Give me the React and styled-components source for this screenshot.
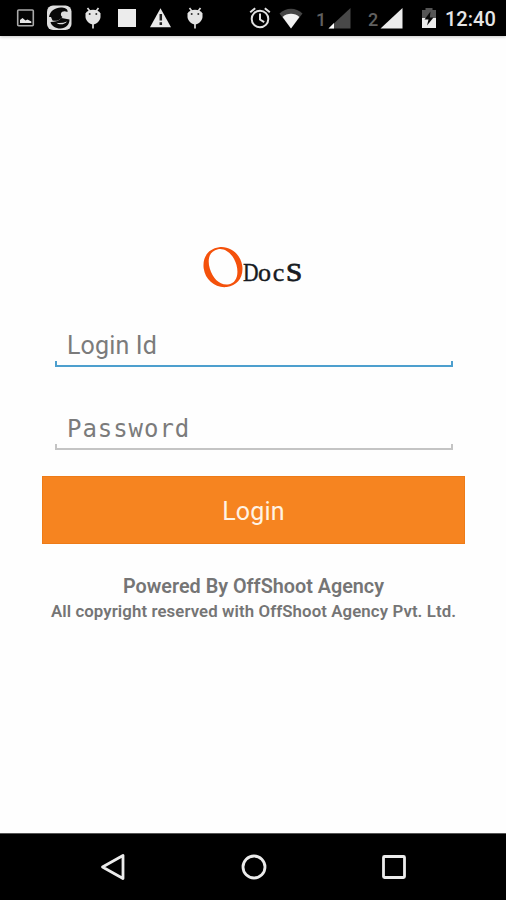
import React from "react";
import styled, { createGlobalStyle } from "styled-components";

const GlobalStyle = createGlobalStyle`
  * { box-sizing: border-box; }
  body { margin: 0; background: #fefefe; font-family: Roboto, sans-serif; }
`;

const Screen = styled.div`
  display: flex;
  flex-direction: column;
  width: 506px;
  height: 900px;
  overflow: hidden;
  background: #fefefe;
`;

const StatusBar = styled.header`
  display: flex;
  flex: none;
  height: 36px;
  padding: 4px 0 4px 14px;
  background: #000;
  box-shadow: 0 1px 3px rgba(0, 0, 0, 0.22);
`;

const StatusIcon = styled.svg`
  display: block;
  flex: none;
  height: 28px;
  margin-left: ${(p) => p.$gap || 0}px;
`;

const SimNumber = styled.span`
  width: 12px;
  margin-left: ${(p) => p.$gap}px;
  font: 500 18px/31px Roboto, sans-serif;
  text-align: center;
  color: #606060;
`;

const Clock = styled.time`
  margin-left: 7px;
  font: 500 20px/30px Roboto, sans-serif;
  letter-spacing: 0;
  color: #e6e6e6;
`;

const Main = styled.main`
  display: flex;
  flex: 1;
  flex-direction: column;
  padding: 209px 41px 0 42px;
`;

const Logo = styled.div`
  display: flex;
  align-self: center;
  height: 44px;
`;

const LogoMark = styled.svg`
  display: block;
  width: 41px;
  height: 44px;
`;

const LogoText = styled.span`
  display: flex;
  align-items: baseline;
  width: 62px;
  padding-top: 14px;
  font: 25px/28px "Liberation Serif", serif;
  color: #171b22;
  -webkit-text-stroke: 0.4px #171b22;
`;

const LogoCap = styled.span`
  display: inline-block;
  width: 15px;
  transform: scaleX(0.86);
  transform-origin: left;
`;

const LogoLower = styled.span`
  font-size: 26px;
  letter-spacing: 1.8px;
`;

const LogoLast = styled.span`
  display: inline-block;
  font-size: 26px;
  -webkit-text-stroke: 0.8px #171b22;
  transform: scaleX(1.12);
  transform-origin: left;
`;

const Field = styled.label`
  display: block;
  position: relative;
  height: 43px;
  margin: ${(p) => p.$top}px 12px 0 13px;
  border-bottom: 2px solid ${(p) => p.$color};

  &::before,
  &::after {
    content: "";
    position: absolute;
    bottom: 0;
    width: 2px;
    height: 4px;
    background: ${(p) => p.$color};
  }
  &::before { left: 0; }
  &::after { right: 0; }
`;

const Input = styled.input`
  display: block;
  width: 100%;
  height: 43px;
  padding: 0 12px;
  border: 0;
  outline: 0;
  background: transparent;
  font: ${(p) => (p.$mono ? '24px "DejaVu Sans Mono", monospace' : "25px Roboto, sans-serif")};
  letter-spacing: ${(p) => p.$spacing}px;

  &::placeholder { color: #7b7b7b; opacity: 1; }
`;

const LoginButton = styled.button`
  width: 423px;
  height: 68px;
  margin-top: 26px;
  padding: 3px 0 0;
  border: 1px solid #ee7b17;
  background: #f68420;
  font: 25px Roboto, sans-serif;
  letter-spacing: 0.2px;
  color: #fff3e4;
`;

const Footer = styled.footer`
  margin: 30px -20px 0;
  text-align: center;
  color: #757575;
`;

const Powered = styled.p`
  margin: 0;
  font: 600 19.8px/25px Roboto, sans-serif;
`;

const Copyright = styled.p`
  margin: 0;
  font: 600 16.8px/25px Roboto, sans-serif;
  letter-spacing: 0.1px;
`;

const NavBar = styled.nav`
  display: flex;
  flex: none;
  justify-content: space-between;
  align-items: center;
  height: 67px;
  padding: 0 96px 0 97px;
  border-top: 1px solid #555;
  background: #000;
`;

const NavIcon = styled.svg`
  display: block;
  width: 32px;
  height: 32px;
  fill: none;
  stroke: #ececec;
  stroke-width: 2.8;
  stroke-linejoin: round;
`;

/* Status glyphs are all drawn on a 28px tall grid. */
function Picture() {
  return (
    <StatusIcon width="24" viewBox="0 0 24 28">
      <rect x="3.7" y="6" width="15.6" height="15.8" rx="1" fill="#050505" stroke="#aaa" strokeWidth="1.6" />
      <path d="M6 19v-3l2.5-2 3 2.4 2-1 3.8 2V19z" fill="#e8e8e8" />
    </StatusIcon>
  );
}

function Messenger() {
  return (
    <StatusIcon width="28" viewBox="0 0 28 28" $gap={7}>
      <rect x="2" y="1.5" width="24.5" height="24.5" rx="6" fill="#dedede" />
      <path d="M4 13C5 6.500 11 3 17 3.500c4 .3 6 2 5.500 4.500-3-1.300-6-.5-6.500 1.500-.3 1.500 0 2.500 1.500 3.500-3 3.500-7 4.500-10 3.500L6 13z" fill="#080808" />
      <path d="M5.500 18c4 0 8-1 11-4l8 1.500C24.500 21 20.500 24.500 15.500 24.500s-9-2.500-10-6.500z" fill="#080808" />
      <path d="M11.500 18.700c3.500.6 7 .1 10.500-1.300-2 3-7.500 4-10.500 1.300z" fill="#ddd" />
    </StatusIcon>
  );
}

function Android({ gap }) {
  return (
    <StatusIcon width="20" viewBox="0 0 20 28" $gap={gap}>
      <path d="M4.500 4l3 4M15.500 4l-3 4M10 18v6.500" stroke="#ddd" strokeWidth="1.7" />
      <path d="M2.500 9.500C5 4.500 15 4.500 17.500 9.500V13c0 3-4 7.500-7.500 7.500S2.500 16 2.500 13z" fill="#e4e4e4" />
      <circle cx="6.700" cy="9.900" r="1" fill="#333" />
      <circle cx="13.300" cy="9.900" r="1" fill="#333" />
    </StatusIcon>
  );
}

function Block() {
  return (
    <StatusIcon width="20" viewBox="0 0 20 28" $gap={14}>
      <rect x="1" y="5" width="18" height="18" fill="#ececec" />
    </StatusIcon>
  );
}

function Warning() {
  return (
    <StatusIcon width="24" viewBox="0 0 24 28" $gap={11}>
      <path d="M12.500 4.200L23 23.300H2z" fill="#eaeaea" />
      <path d="M12.800 10v6.500M12.800 18.300v2.700" stroke="#222" strokeWidth="2.500" />
    </StatusIcon>
  );
}

function Alarm() {
  return (
    <StatusIcon width="24" viewBox="0 0 24 28" $gap={43}>
      <g fill="none" stroke="#e2e2e2" strokeWidth="2">
        <circle cx="12" cy="15" r="8.300" />
        <path d="M2.200 8.300l5-4M21.800 8.300l-5-4M12 9.500v6l4.200 2.600" />
      </g>
    </StatusIcon>
  );
}

function Wifi() {
  return (
    <StatusIcon width="26" viewBox="0 0 26 28" $gap={6}>
      <path d="M1.500 9.500C8 3.200 18 3.200 24.500 9.500L13 24.500z" fill="#454545" />
      <path d="M4.600 13C9 8.800 17 8.800 21.400 13L13 24.500z" fill="#f2f2f2" />
    </StatusIcon>
  );
}

function Signal({ full }) {
  return (
    <StatusIcon width="24" viewBox="0 0 24 28" $gap={1}>
      <path d="M22.500 4v20.500H.5z" fill={full ? "#ececec" : "#484848"} />
      {!full && <path d="M6 19v5.500H.5z" fill="#fff" />}
    </StatusIcon>
  );
}

function Battery() {
  return (
    <StatusIcon width="18" viewBox="0 0 18 28" $gap={16}>
      <path d="M2 6h3.500V4h7v2H16v18H2z" fill="#555" />
      <path d="M2 14h14v10H2z" fill="#eee" />
      <path d="M10.500 7.500L4.500 15.500h4L7 21.500l6.500-8H9.800z" fill="#080808" />
    </StatusIcon>
  );
}

export default function App() {
  return (
    <Screen>
      <GlobalStyle />
      <StatusBar>
        <Picture />
        <Messenger />
        <Android gap={10} />
        <Block />
        <Warning />
        <Android gap={13} />
        <Alarm />
        <Wifi />
        <SimNumber $gap={11}>1</SimNumber>
        <Signal />
        <SimNumber $gap={15}>2</SimNumber>
        <Signal full />
        <Battery />
        <Clock>12:40</Clock>
      </StatusBar>
      <Main>
        <Logo>
          <LogoMark viewBox="0 0 41 44">
            <path
              fillRule="evenodd"
              fill="#f4510b"
              d="M17 2.200C28 .7 38.500 9 40.200 20.500S35.500 40.800 24.800 42C13.500 43.300 3.200 35 1.700 23.500S6.500 3.600 17 2.200ZM16 4.300C7.500 6 5 14 7.800 23.500S17.500 40.500 26 39.500 37 29.500 34.500 20 24 2.700 16 4.300Z"
            />
          </LogoMark>
          <LogoText>
            <LogoCap>D</LogoCap>
            <LogoLower>oc</LogoLower>
            <LogoLast>S</LogoLast>
          </LogoText>
        </Logo>
        <Field $top={35} $color="#4d9fce">
          <Input placeholder="Login Id" aria-label="Login Id" $spacing={0.15} />
        </Field>
        <Field $top={40} $color="#c4c4c4">
          <Input type="password" placeholder="Password" aria-label="Password" $mono $spacing={0.95} />
        </Field>
        <LoginButton>Login</LoginButton>
        <Footer>
          <Powered>Powered By OffShoot Agency</Powered>
          <Copyright>All copyright reserved with OffShoot Agency Pvt. Ltd.</Copyright>
        </Footer>
      </Main>
      <NavBar>
        <NavIcon viewBox="0 0 32 32"><path d="M26 4.500v23L5.500 16z" /></NavIcon>
        <NavIcon viewBox="0 0 32 32"><circle cx="16" cy="16" r="11" /></NavIcon>
        <NavIcon viewBox="0 0 32 32"><rect x="5.500" y="5.500" width="21" height="21" rx="1" /></NavIcon>
      </NavBar>
    </Screen>
  );
}
